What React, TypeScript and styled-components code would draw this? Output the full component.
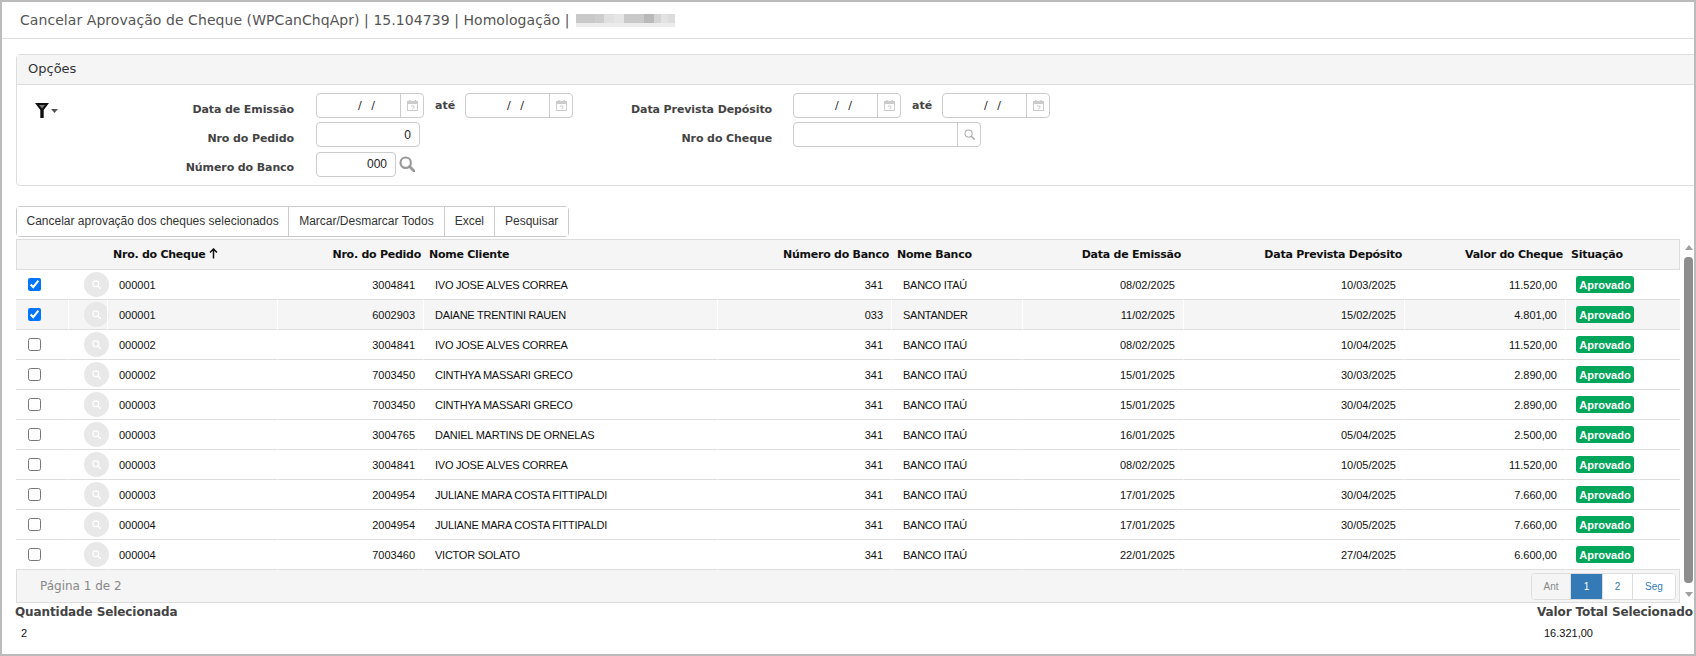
import { createGlobalStyle, styled } from 'styled-components';

const GlobalStyle = createGlobalStyle`
  html, body {
    margin: 0;
    padding: 0;
    background: #fff;
  }

  * {
    box-sizing: border-box;
  }
`;

const verdanaStack = '"DejaVu Sans", Verdana, sans-serif';
const arialStack = '"Liberation Sans", Arial, sans-serif';

const columns = [52, 39, 170, 146, 294, 174, 131, 161, 221, 161, 115];

const cheques = [
  { checked: true, cheque: '000001', pedido: '3004841', cliente: 'IVO JOSE ALVES CORREA', banco: '341', nomeBanco: 'BANCO ITAÚ', emissao: '08/02/2025', deposito: '10/03/2025', valor: '11.520,00' },
  { checked: true, cheque: '000001', pedido: '6002903', cliente: 'DAIANE TRENTINI RAUEN', banco: '033', nomeBanco: 'SANTANDER', emissao: '11/02/2025', deposito: '15/02/2025', valor: '4.801,00', hover: true },
  { checked: false, cheque: '000002', pedido: '3004841', cliente: 'IVO JOSE ALVES CORREA', banco: '341', nomeBanco: 'BANCO ITAÚ', emissao: '08/02/2025', deposito: '10/04/2025', valor: '11.520,00' },
  { checked: false, cheque: '000002', pedido: '7003450', cliente: 'CINTHYA MASSARI GRECO', banco: '341', nomeBanco: 'BANCO ITAÚ', emissao: '15/01/2025', deposito: '30/03/2025', valor: '2.890,00' },
  { checked: false, cheque: '000003', pedido: '7003450', cliente: 'CINTHYA MASSARI GRECO', banco: '341', nomeBanco: 'BANCO ITAÚ', emissao: '15/01/2025', deposito: '30/04/2025', valor: '2.890,00' },
  { checked: false, cheque: '000003', pedido: '3004765', cliente: 'DANIEL MARTINS DE ORNELAS', banco: '341', nomeBanco: 'BANCO ITAÚ', emissao: '16/01/2025', deposito: '05/04/2025', valor: '2.500,00' },
  { checked: false, cheque: '000003', pedido: '3004841', cliente: 'IVO JOSE ALVES CORREA', banco: '341', nomeBanco: 'BANCO ITAÚ', emissao: '08/02/2025', deposito: '10/05/2025', valor: '11.520,00' },
  { checked: false, cheque: '000003', pedido: '2004954', cliente: 'JULIANE MARA COSTA FITTIPALDI', banco: '341', nomeBanco: 'BANCO ITAÚ', emissao: '17/01/2025', deposito: '30/04/2025', valor: '7.660,00' },
  { checked: false, cheque: '000004', pedido: '2004954', cliente: 'JULIANE MARA COSTA FITTIPALDI', banco: '341', nomeBanco: 'BANCO ITAÚ', emissao: '17/01/2025', deposito: '30/05/2025', valor: '7.660,00' },
  { checked: false, cheque: '000004', pedido: '7003460', cliente: 'VICTOR SOLATO', banco: '341', nomeBanco: 'BANCO ITAÚ', emissao: '22/01/2025', deposito: '27/04/2025', valor: '6.600,00' },
];

const mosaic = [
  { w: 19, c: '#c9c9c9' },
  { w: 9, c: '#cdcdcd' },
  { w: 10, c: '#e0e0e0' },
  { w: 10, c: '#e5e5e5' },
  { w: 20, c: '#c9c9c9' },
  { w: 10, c: '#b9b9b9' },
  { w: 7, c: '#d4d4d4' },
  { w: 7, c: '#e2e2e2' },
  { w: 7, c: '#dcdcdc' },
];

const CalendarIcon = () => (
  <svg width='11' height='11' viewBox='0 0 11 11' fill='none'>
    <rect x='0.5' y='1.5' width='10' height='9' fill='#fff' stroke='#ccc' />
    <rect x='0' y='1' width='11' height='3' fill='#ccc' />
    <rect x='2' y='0' width='1.5' height='2' fill='#ccc' />
    <rect x='7.5' y='0' width='1.5' height='2' fill='#ccc' />
    <path d='M4 6h3v1l-1.5 2.5' stroke='#ccc' />
  </svg>
);

const MagnifierIcon = ({ size, color, weight }: { size: number; color: string; weight: number }) => (
  <svg width={size} height={size} viewBox='0 0 16 16' fill='none'>
    <circle cx='6.7' cy='6.7' r='5.2' stroke={color} strokeWidth={weight} />
    <path d='M10.6 10.6L15 15' stroke={color} strokeWidth={weight + 0.6} strokeLinecap='round' />
  </svg>
);

const FunnelIcon = () => (
  <svg width='23' height='15' viewBox='0 0 23 15'>
    <path d='M0 0H14L8.7 7V15H5.3V7Z' fill='#111' />
    <path d='M4 2H10L7 5.5Z' fill='#777' />
    <path d='M16 6H23L19.5 10Z' fill='#555' />
  </svg>
);

const SortArrow = () => (
  <svg width='9' height='11' viewBox='0 0 9 11' fill='none'>
    <path d='M4.5 10.5V1.5M1 4.5L4.5 1L8 4.5' stroke='#111' strokeWidth='1.5' />
  </svg>
);

const DateField = () => (
  <DateGroup>
    <DateInput readOnly value='/ /' />
    <Addon>
      <CalendarIcon />
    </Addon>
  </DateGroup>
);

const App = () => {
  return (
    <Frame>
      <GlobalStyle />
      <TitleBar>
        <span>Cancelar Aprovação de Cheque (WPCanChqApr) | 15.104739 | Homologação |</span>
        <Redaction>
          {mosaic.map(({ w, c }, i) => (
            <RedactionBlock key={i} $w={w} $c={c} />
          ))}
        </Redaction>
      </TitleBar>

      <Content>
        <Panel>
          <PanelHead>Opções</PanelHead>
          <PanelBody>
            <FilterButton>
              <FunnelIcon />
            </FilterButton>
            <FieldGrid $labelWidth={236} $gap={22}>
              <FieldLabel>Data de Emissão</FieldLabel>
              <FieldControls>
                <DateField />
                <Until>até</Until>
                <DateField />
              </FieldControls>
              <FieldLabel>Nro do Pedido</FieldLabel>
              <FieldControls>
                <NumberInput readOnly value='0' $w={104} />
              </FieldControls>
              <FieldLabel>Número do Banco</FieldLabel>
              <FieldControls>
                <NumberInput readOnly value='000' $w={80} />
                <LookupIcon>
                  <MagnifierIcon size={16} color='#999' weight={2.2} />
                </LookupIcon>
              </FieldControls>
            </FieldGrid>
            <FieldGrid $labelWidth={199} $gap={21}>
              <FieldLabel>Data Prevista Depósito</FieldLabel>
              <FieldControls>
                <DateField />
                <Until>até</Until>
                <DateField />
              </FieldControls>
              <FieldLabel>Nro do Cheque</FieldLabel>
              <FieldControls>
                <SearchGroup>
                  <SearchInput readOnly value='' />
                  <Addon>
                    <MagnifierIcon size={11} color='#aaa' weight={1.5} />
                  </Addon>
                </SearchGroup>
              </FieldControls>
            </FieldGrid>
          </PanelBody>
        </Panel>

        <ButtonGroup>
          <GroupButton>Cancelar aprovação dos cheques selecionados</GroupButton>
          <GroupButton>Marcar/Desmarcar Todos</GroupButton>
          <GroupButton>Excel</GroupButton>
          <GroupButton>Pesquisar</GroupButton>
        </ButtonGroup>

        <ScrollArea>
          <GridBlock>
            <Grid>
              <colgroup>
                {columns.map((w, i) => (
                  <GridCol key={i} $w={w} />
                ))}
              </colgroup>
              <thead>
                <tr>
                  <HeadCell />
                  <HeadCell />
                  <HeadCell>
                    <SortLabel>
                      Nro. do Cheque
                      <SortArrow />
                    </SortLabel>
                  </HeadCell>
                  <HeadCell $right>Nro. do Pedido</HeadCell>
                  <HeadCell>Nome Cliente</HeadCell>
                  <HeadCell $right>Número do Banco</HeadCell>
                  <HeadCell>Nome Banco</HeadCell>
                  <HeadCell $right>Data de Emissão</HeadCell>
                  <HeadCell $right>Data Prevista Depósito</HeadCell>
                  <HeadCell $right>Valor do Cheque</HeadCell>
                  <HeadCell>Situação</HeadCell>
                </tr>
              </thead>
              <tbody>
                {cheques.map((row, i) => (
                  <GridRow key={i} $hover={row.hover}>
                    <CheckCell>
                      <RowCheck type='checkbox' checked={row.checked} readOnly />
                    </CheckCell>
                    <IconCell>
                      <RoundButton>
                        <MagnifierIcon size={9} color='#fff' weight={2} />
                      </RoundButton>
                    </IconCell>
                    <Cell>{row.cheque}</Cell>
                    <Cell $right>{row.pedido}</Cell>
                    <Cell $tight>{row.cliente}</Cell>
                    <Cell $right>{row.banco}</Cell>
                    <Cell $tight>{row.nomeBanco}</Cell>
                    <Cell $right>{row.emissao}</Cell>
                    <Cell $right>{row.deposito}</Cell>
                    <Cell $right>{row.valor}</Cell>
                    <Cell>
                      <StatusBadge>Aprovado</StatusBadge>
                    </Cell>
                  </GridRow>
                ))}
              </tbody>
            </Grid>
            <GridFooter>
              <PageInfo>Página 1 de 2</PageInfo>
              <Pagination>
                <PageLink $w={38} $muted>Ant</PageLink>
                <PageLink $w={32} $active>1</PageLink>
                <PageLink $w={30}>2</PageLink>
                <PageLink $w={43}>Seg</PageLink>
              </Pagination>
            </GridFooter>
          </GridBlock>
          <Scrollbar>
            <ScrollArrowUp />
            <ScrollThumb />
            <ScrollArrowDown />
          </Scrollbar>
        </ScrollArea>

        <Totals>
          <TotalBlock>
            <TotalLabel>Quantidade Selecionada</TotalLabel>
            <TotalValue $indent={6}>2</TotalValue>
          </TotalBlock>
          <TotalBlock $w={157}>
            <TotalLabel>Valor Total Selecionado</TotalLabel>
            <TotalValue $indent={7}>16.321,00</TotalValue>
          </TotalBlock>
        </Totals>
      </Content>
    </Frame>
  );
};

export default App;

const Frame = styled.div`
  width: 1696px;
  height: 656px;
  border: 2px solid #bbb;
  overflow: hidden;
  background: #fff;
`;

const TitleBar = styled.div`
  display: flex;
  align-items: center;
  gap: 7px;

  height: 37px;
  padding-left: 18px;
  border-bottom: 1px solid #ddd;

  font-family: ${verdanaStack};
  font-size: 14px;
  letter-spacing: 0.06px;
  color: #555;
`;

const Redaction = styled.div`
  display: flex;
  height: 13px;
`;

const RedactionBlock = styled.div<{ $w: number; $c: string }>`
  width: ${({ $w }) => $w}px;
  background: linear-gradient(${({ $c }) => $c} 70%, #ececec 70%);
`;

const Content = styled.div`
  padding: 15px 0 0 14px;
`;

const Panel = styled.div`
  margin-right: -10px;
  border: 1px solid #ddd;
  border-radius: 4px;
`;

const PanelHead = styled.div`
  display: flex;
  align-items: center;

  height: 30px;
  padding: 0 0 2px 11px;
  border-bottom: 1px solid #ddd;

  background: #f5f5f5;

  font-family: ${verdanaStack};
  font-size: 13px;
  color: #333;
`;

const PanelBody = styled.div`
  display: flex;
  padding: 8px 0 7px 18px;
  height: 100px;
`;

const FilterButton = styled.div`
  display: flex;
  width: 23px;
  padding-top: 10px;
`;

const FieldGrid = styled.div<{ $labelWidth: number; $gap: number }>`
  display: grid;
  grid-template-columns: ${({ $labelWidth }) => $labelWidth}px auto;
  grid-auto-rows: 25px;
  column-gap: ${({ $gap }) => $gap}px;
  row-gap: 4.25px;
  align-content: start;
`;

const FieldLabel = styled.div`
  display: flex;
  align-items: center;
  justify-content: flex-end;

  padding-top: 7px;

  font-family: ${verdanaStack};
  font-size: 11px;
  font-weight: 700;
  letter-spacing: -0.1px;
  color: #444;
`;

const FieldControls = styled.div`
  display: flex;
  align-items: center;
`;

const inputBase = `
  height: 25px;
  border: 1px solid #ccc;
  border-radius: 4px;
  outline: none;
  background: #fff;
  font-family: ${arialStack};
  font-size: 12px;
  color: #222;
`;

const DateGroup = styled.div`
  ${inputBase}
  display: flex;
  width: 108px;
`;

const DateInput = styled.input`
  width: 83px;
  height: 100%;
  padding: 0 0 0 16px;
  border: none;
  outline: none;
  background: transparent;

  font-family: ${verdanaStack};
  font-size: 11px;
  color: #222;
  text-align: center;
  word-spacing: 6px;
`;

const Addon = styled.div`
  flex: 1;
  display: flex;
  align-items: center;
  justify-content: center;
  border-left: 1px solid #ccc;
`;

const Until = styled.div`
  width: 41px;
  padding: 0 0 1px 11px;

  font-family: ${verdanaStack};
  font-size: 11px;
  font-weight: 700;
  color: #444;
`;

const NumberInput = styled.input<{ $w: number }>`
  ${inputBase}
  width: ${({ $w }) => $w}px;
  padding: 0 8px 0 0;
  text-align: right;
`;

const LookupIcon = styled.div`
  display: flex;
  margin-left: 3px;
`;

const SearchGroup = styled.div`
  ${inputBase}
  display: flex;
  width: 188px;
`;

const SearchInput = styled.input`
  width: 163px;
  height: 100%;
  border: none;
  outline: none;
  background: transparent;
`;

const ButtonGroup = styled.div`
  display: inline-flex;
  margin-top: 20px;
  height: 31px;
  border: 1px solid #ccc;
  border-radius: 4px;
  vertical-align: top;
`;

const GroupButton = styled.button`
  padding: 0 10px 2px;
  border: none;
  border-left: 1px solid #ccc;
  background: #fff;

  font-family: ${arialStack};
  font-size: 12px;
  color: #333;

  &:first-child {
    padding: 0 9.5px 2px;
    border-left: none;
  }
`;

const ScrollArea = styled.div`
  display: flex;
  margin-top: 2px;
`;

const GridBlock = styled.div`
  width: 1664px;
`;

const Grid = styled.table`
  width: 1664px;
  table-layout: fixed;
  border-collapse: separate;
  border-spacing: 0;
`;

const GridCol = styled.col<{ $w: number }>`
  width: ${({ $w }) => $w}px;
`;

const HeadCell = styled.th<{ $right?: boolean }>`
  height: 31px;
  padding: ${({ $right }) => ($right ? '0 2px 0 0' : '0 0 0 6px')};
  border-top: 1px solid #ddd;
  border-bottom: 1px solid #ddd;
  background: #f5f5f5;

  font-family: ${verdanaStack};
  font-size: 11px;
  font-weight: 700;
  letter-spacing: -0.25px;
  color: #111;
  text-align: ${({ $right }) => ($right ? 'right' : 'left')};
  white-space: nowrap;

  &:first-child {
    border-left: 1px solid #ddd;
  }

  &:last-child {
    border-right: 1px solid #ddd;
  }
`;

const SortLabel = styled.span`
  display: inline-flex;
  align-items: center;
  gap: 3px;

  svg {
    margin-top: -3px;
  }
`;

const Cell = styled.td<{ $right?: boolean; $tight?: boolean }>`
  height: 30px;
  padding: ${({ $right }) => ($right ? '0 8px 0 0' : '0 0 0 11px')};
  border-bottom: 1px solid #ddd;

  font-family: ${arialStack};
  font-size: 11px;
  letter-spacing: ${({ $tight }) => ($tight ? '-0.25px' : '0')};
  color: #111;
  text-align: ${({ $right }) => ($right ? 'right' : 'left')};
  white-space: nowrap;
`;

const CheckCell = styled(Cell)`
  padding: 0 0 0 12px;
  line-height: 0;
`;

const IconCell = styled(Cell)`
  padding: 0 0 0 15px;
`;

const GridRow = styled.tr<{ $hover?: boolean }>`
  background: ${({ $hover }) => ($hover ? '#f5f5f5' : '#fff')};

  td + td {
    border-left: 1px solid ${({ $hover }) => ($hover ? '#fff' : 'transparent')};
  }
`;

const RowCheck = styled.input`
  width: 13px;
  height: 13px;
  margin: 0;
`;

const RoundButton = styled.div`
  display: flex;
  align-items: center;
  justify-content: center;

  width: 25px;
  height: 25px;
  border-radius: 50%;

  background: #e8e8e8;
`;

const StatusBadge = styled.span`
  display: inline-flex;
  align-items: center;
  justify-content: center;

  width: 58px;
  height: 17px;
  margin-left: -1px;
  border-radius: 3px;

  background: #00a65a;

  font-family: ${arialStack};
  font-size: 11px;
  font-weight: 700;
  color: #fff;
`;

const GridFooter = styled.div`
  display: flex;
  align-items: center;
  justify-content: space-between;

  height: 33px;
  padding: 0 3px 0 23px;
  border: 1px solid #ddd;
  border-top: none;

  background: #f5f5f5;
`;

const PageInfo = styled.div`
  font-family: ${verdanaStack};
  font-size: 12px;
  color: #888;
`;

const Pagination = styled.div`
  display: flex;
  height: 27px;
  border: 1px solid #ddd;
  border-radius: 4px;
  overflow: hidden;
  background: #fff;
`;

const PageLink = styled.div<{ $w: number; $active?: boolean; $muted?: boolean }>`
  display: flex;
  align-items: center;
  justify-content: center;

  width: ${({ $w }) => $w}px;
  border-left: 1px solid #ddd;

  background: ${({ $active, $muted }) => ($active ? '#337ab7' : $muted ? '#f5f5f5' : '#fff')};

  font-family: ${arialStack};
  font-size: 10px;
  color: ${({ $active, $muted }) => ($active ? '#fff' : $muted ? '#888' : '#337ab7')};

  &:first-child {
    border-left: none;
  }
`;

const Scrollbar = styled.div`
  display: flex;
  flex-direction: column;
  align-items: center;

  width: 9px;
  margin-left: 4px;
  padding-top: 6px;
`;

const ScrollArrowUp = styled.div`
  border-left: 4.5px solid transparent;
  border-right: 4.5px solid transparent;
  border-bottom: 5px solid #a0a0a0;
`;

const ScrollThumb = styled.div`
  width: 9px;
  height: 326px;
  margin: 7px 0 9px;
  border-radius: 4px;
  background: #8e8e8e;
`;

const ScrollArrowDown = styled.div`
  border-left: 4.5px solid transparent;
  border-right: 4.5px solid transparent;
  border-top: 5px solid #a0a0a0;
`;

const Totals = styled.div`
  display: flex;
  justify-content: space-between;
  margin-left: -1px;
`;

const TotalBlock = styled.div<{ $w?: number }>`
  ${({ $w }) => ($w ? `width: ${$w}px;` : '')}
  white-space: nowrap;
`;

const TotalLabel = styled.div`
  height: 18px;
  line-height: 18px;

  font-family: ${verdanaStack};
  font-size: 12px;
  font-weight: 700;
  letter-spacing: -0.1px;
  color: #444;
`;

const TotalValue = styled.div<{ $indent: number }>`
  margin-top: 3px;
  padding-left: ${({ $indent }) => $indent}px;
  line-height: 18px;

  font-family: ${arialStack};
  font-size: 11px;
  color: #111;
`;
